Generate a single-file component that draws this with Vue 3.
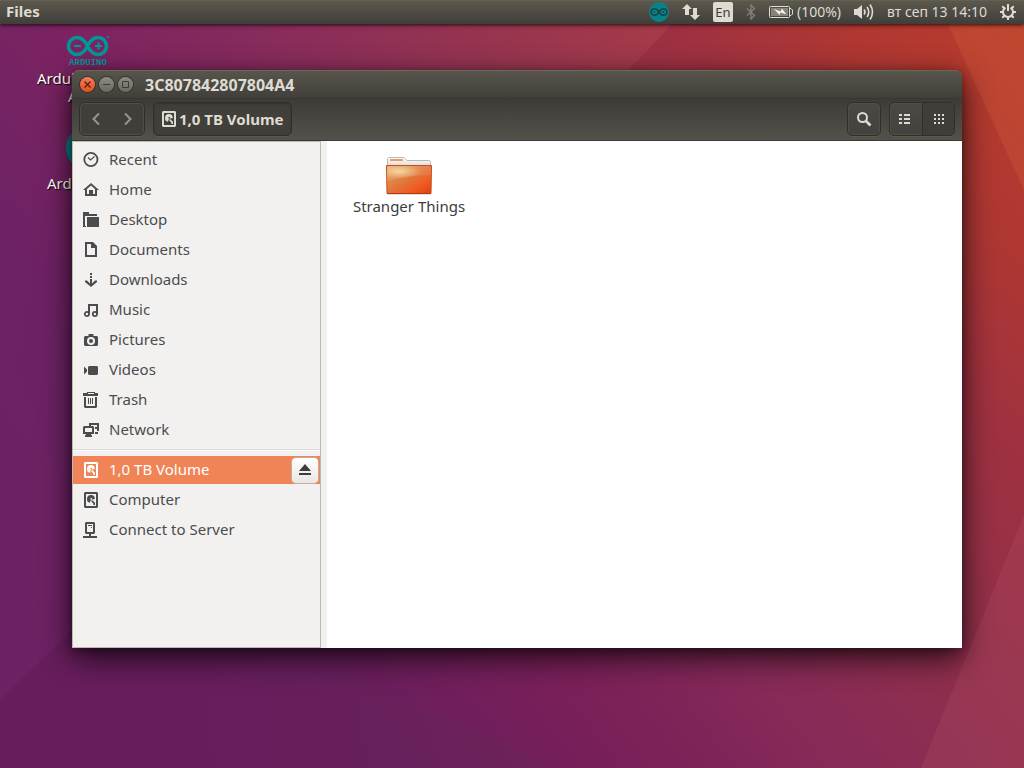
<script setup>
import { ref } from 'vue'

const drive = {
  fill: 'M2 0h12l1 1v14l-1 1H2l-1-1V1zM3 2v12h10V2zM11.800 7a3.900 3.900 0 1 0-4.800 3.800l.500-2 1-1zM7.500 6h1.500v1.500H7.500zM8.500 8.500h1.500l1 1.500 1 .500V13h-1.500l-.500-2-1.500-1z'
}

const places = [
  { name: 'Recent', stroke: 'M14.500 7.500a6.600 6.600 0 1 1-13.200 0a6.600 6.600 0 0 1 13.200 0z', thin: 'M5 5.500L7.500 8l4-3.500' },
  { name: 'Home', fill: 'M8 1L0 8h2v6h12V8h2zM8 3.600L12 7v5h-2V8H6v4H4V7z' },
  { name: 'Desktop', fill: 'M0 0h6v2h8v2H3v11H0zM4 5h12v10H4zM2 4v10h1V4z' },
  { name: 'Documents', fill: 'M2 0h8l4 4v11H2zM4 2v11h8V6H8V2z' },
  { name: 'Downloads', fill: 'M7 1h2v2H7zM7 4h2v2H7zM7 7h2v4.500l3-3h2V10l-6 5L2 10V8.500h2l3 3z' },
  { name: 'Music', fill: 'M5 2h10v10h-2V4H7v8H5z', stroke: 'M6 12a2.100 2.100 0 1 1-4.200 0a2.100 2.100 0 0 1 4.200 0zM14 12a2.100 2.100 0 1 1-4.200 0a2.100 2.100 0 0 1 4.200 0z' },
  { name: 'Pictures', fill: 'M5.500 2h5v2H14l1 1v8l-1 1H2l-1-1V5l1-1h3.500zM8 5a4 4 0 1 0 0 8a4 4 0 0 0 0-8zM8 7a2 2 0 1 1 0 4a2 2 0 0 1 0-4z' },
  { name: 'Videos', fill: 'M1 4.500l3 3v2l-3 3zM6 4h8l1 1v7l-1 1H6L5 12V5z' },
  { name: 'Trash', fill: 'M4 0h8v1h3v3H0V1h4zM5 1v1h6V1zM1 5h2v9h9V5h2v10l-1 1H2l-1-1zM5 6h1v6H5zM7 6h1v6H7zM9 6h1v6H9z' },
  { name: 'Network', fill: 'M6 1h10v8h-2v1h1v2h-3v-2h2V7H12V5h2V3H8v1H6zM1 4h9l1 1v7H8l1 2v1H2v-1l1-2H0V5zM2 6v4h7V6z' }
]

const devices = [
  { name: '1,0 TB Volume', ...drive, mounted: true },
  { name: 'Computer', ...drive },
  { name: 'Connect to Server', fill: 'M3 0h8l1 1v10l-1 1H8v2h6v2H0v-2h6v-2H3l-1-1V1zM4 2v8h6V2zM5 3h4v1H5zM8 5h1v1H8z' }
]

const current = ref('1,0 TB Volume')
</script>

<template>
  <div class="desktop">
    <svg class="wallpaper" viewBox="0 0 1024 768" preserveAspectRatio="none" aria-hidden="true">
      <defs>
        <linearGradient id="facet" x1="0" y1="0" x2="1" y2="0">
          <stop offset="0" stop-color="#8a3fa0" stop-opacity=".12" />
          <stop offset="1" stop-color="#8a3fa0" stop-opacity="0" />
        </linearGradient>
        <linearGradient id="ridge" x1="0" y1="0" x2="1" y2="0">
          <stop offset="0" stop-color="#d06a70" stop-opacity="0" />
          <stop offset="1" stop-color="#d06a70" stop-opacity=".16" />
        </linearGradient>
        <linearGradient id="valley" x1="0" y1="0" x2="1" y2="0">
          <stop offset="0" stop-color="#5c2f50" stop-opacity="0" />
          <stop offset="1" stop-color="#5c2f50" stop-opacity=".25" />
        </linearGradient>
      </defs>
      <polygon points="0,24 0,305 72,520 500,24" fill="url(#facet)" />
      <polygon points="0,305 72,520 72,630 0,700" fill="#8a3a80" opacity=".16" />
      <polygon points="250,24 672,24 300,420" fill="url(#ridge)" />
      <polygon points="948,24 1024,190 1024,24" fill="#d0603a" opacity=".3" />
      <polygon points="1024,515 921,768 1024,768" fill="#c05a70" opacity=".2" />
      <polygon points="200,648 300,648 552,768 200,768" fill="url(#valley)" />
    </svg>

    <header class="panel">
      <span class="app-name">Files</span>
      <div class="tray">
        <button aria-label="Arduino">
          <svg width="20" height="20" viewBox="0 0 20 20">
            <circle cx="10" cy="10" r="10" fill="#0a8287" />
            <path d="M10 10C8.500 7.500 7.500 6.700 5.500 6.700a3.300 3.300 0 0 0 0 6.600C7.500 13.300 8.500 12.500 10 10s2.500-3.300 4.500-3.300a3.300 3.300 0 0 1 0 6.600c-2 0-3-.8-4.500-3.300z" fill="none" stroke="#12454a" stroke-width="1.500" />
            <path d="M4.500 10h2M13.500 10h2M14.500 9v2" stroke="#12454a" />
          </svg>
        </button>
        <button aria-label="Network connections">
          <svg width="18" height="18" viewBox="0 0 18 18" fill="#dfdbd2">
            <path d="M5 1l5 5H7v6H3V6H0z" /><path d="M11 5h4v7h3l-5 5-5-5h3z" />
          </svg>
        </button>
        <button class="layout"><span>En</span></button>
        <button aria-label="Bluetooth">
          <svg width="10" height="16" viewBox="0 0 10 16" fill="none" stroke="#85837b" stroke-width="1.300">
            <path d="M1 4.500l7.500 7L5 15V1l3.500 3.500L1 11.500" />
          </svg>
        </button>
        <button class="battery">
          <svg width="24" height="14" viewBox="0 0 24 14">
            <rect x=".5" y="1.500" width="20" height="11" rx="1" fill="none" stroke="#dfdbd2" />
            <rect x="2" y="3" width="17" height="8" fill="#85837b" />
            <path d="M21 3.500h1l1.500 1.500v4l-1.500 1.500h-1" fill="none" stroke="#dfdbd2" />
            <path d="M5 4l6.500 2.500L13 3.500l4.500 6L11.500 7.500 10.500 10z" fill="#f4f0e6" />
          </svg>
          <span>(100%)</span>
        </button>
        <button aria-label="Volume">
          <svg width="20" height="18" viewBox="0 0 20 18">
            <path d="M0 6h3l5-4v14l-5-4H0z" fill="#dfdbd2" />
            <g fill="none" stroke="#dfdbd2" stroke-width="1.600">
              <path d="M10 6.500q2 2.500 0 5" /><path d="M13 4q3.500 5 0 10" /><path d="M16 1.500q5 7.500 0 15" />
            </g>
          </svg>
        </button>
        <button class="clock"><span>вт сеп 13 14:10</span></button>
        <button aria-label="System">
          <svg width="16" height="16" viewBox="0 0 16 16" fill="none" stroke="#dfdbd2">
            <path d="M5.500 3.700a5 5 0 1 0 5 0" stroke-width="2" />
            <path d="M8 0v7" stroke-width="2" />
            <path d="M2.300 2.300l2 2M13.700 2.300l-2 2M0 8h3M13 8h3M2.300 13.700l2-2M13.700 13.700l-2-2M8 13v3" stroke-width="2" />
          </svg>
        </button>
      </div>
    </header>

    <div class="shortcut first">
      <svg width="44" height="32" viewBox="0 0 44 32">
        <path d="M21.500 11C18.500 5 15.500 2.500 11 2.500a8.500 8.500 0 0 0 0 17c4.500 0 7.500-2.500 10.500-8.500S27.500 2.500 32 2.500a8.500 8.500 0 0 1 0 17c-4.500 0-7.500-2.500-10.500-8.500z" fill="none" stroke="#00979c" stroke-width="3.600" />
        <path d="M8 11h7M29 11h7M32.500 7.500v7" stroke="#00979c" stroke-width="2" />
        <circle cx="42" cy="2" r="1" fill="#00979c" />
        <text x="22" y="30" text-anchor="middle" class="brand">ARDUINO</text>
      </svg>
      <span class="caption">Arduino<br><span class="indent">A</span></span>
    </div>
    <div class="shortcut second">
      <svg width="44" height="44" viewBox="0 0 44 44"><circle cx="22" cy="22" r="22" fill="#0a8287" /></svg>
      <span class="caption">Arduino</span>
    </div>

    <main class="window">
      <div class="titlebar">
        <button class="dot close" aria-label="Close">
          <svg width="7" height="7" viewBox="0 0 7 7"><path d="M.5.500l6 6M6.500.500l-6 6" stroke="#522013" stroke-width="1.300" /></svg>
        </button>
        <button class="dot" aria-label="Minimize">
          <svg width="7" height="7" viewBox="0 0 7 7"><path d="M0 3.500h7" stroke="#3c3b37" /></svg>
        </button>
        <button class="dot" aria-label="Maximize">
          <svg width="7" height="7" viewBox="0 0 7 7"><path d="M.5.500h6v6h-6z" fill="none" stroke="#3c3b37" /></svg>
        </button>
        <h1>3C807842807804A4</h1>
      </div>
      <div class="toolbar">
        <div class="group history">
          <button aria-label="Back"><svg width="16" height="16" viewBox="0 0 16 16"><path d="M11 2.500L5.500 8l5.500 5.500" /></svg></button>
          <button aria-label="Forward"><svg width="16" height="16" viewBox="0 0 16 16"><path d="M5 2.500L10.500 8 5 13.500" /></svg></button>
        </div>
        <button class="group location">
          <svg width="16" height="16" viewBox="0 0 16 16"><path :d="drive.fill" fill="#dfdbd2" fill-rule="evenodd" /></svg>
          <span>1,0 TB Volume</span>
        </button>
        <div class="spacer"></div>
        <div class="group search">
          <button aria-label="Search">
            <svg width="16" height="16" viewBox="0 0 16 16" fill="none" stroke="#dfdbd2"><circle cx="6.500" cy="6.500" r="4.500" stroke-width="2" /><path d="M10 10l4.500 4.500" stroke-width="2.600" /></svg>
          </button>
        </div>
        <div class="group views">
          <button aria-label="List view">
            <svg width="16" height="16" viewBox="0 0 16 16" fill="#dfdbd2"><path d="M1 3h3v2H1zM6 3h6v2H6zM1 7h3v2H1zM6 7h6v2H6zM1 11h3v2H1zM6 11h6v2H6z" /></svg>
          </button>
          <button class="pressed" aria-label="Icon view">
            <svg width="16" height="16" viewBox="0 0 16 16" fill="#dfdbd2"><path d="M3 3h2v2H3zM7 3h2v2H7zM11 3h2v2h-2zM3 7h2v2H3zM7 7h2v2H7zM11 7h2v2h-2zM3 11h2v2H3zM7 11h2v2H7zM11 11h2v2h-2z" /></svg>
          </button>
        </div>
      </div>
      <div class="body">
        <nav class="sidebar">
          <ul v-for="(list, n) in [places, devices]" :key="n">
            <li v-for="item in list" :key="item.name" :class="{ selected: item.name === current }">
              <button class="place" @click="current = item.name">
                <svg width="16" height="16" viewBox="0 0 16 16">
                  <path v-if="item.fill" :d="item.fill" fill="currentColor" fill-rule="evenodd" />
                  <path v-if="item.stroke" :d="item.stroke" fill="none" stroke="currentColor" stroke-width="1.800" />
                  <path v-if="item.thin" :d="item.thin" fill="none" stroke="currentColor" stroke-width="1.200" />
                </svg>
                <span>{{ item.name }}</span>
              </button>
              <button v-if="item.mounted" class="eject" aria-label="Eject">
                <svg width="12" height="12" viewBox="0 0 12 12" fill="#3c3c3c"><path d="M6 0l6 7H0zM0 9h12v2H0z" /></svg>
              </button>
            </li>
          </ul>
        </nav>
        <section class="files">
          <button class="folder">
            <svg width="48" height="40" viewBox="0 0 48 40">
              <defs>
                <linearGradient id="front" x1="0" y1="0" x2="1" y2="1">
                  <stop offset="0" stop-color="#e8a060" /><stop offset=".45" stop-color="#e07a3c" /><stop offset=".75" stop-color="#f05a22" /><stop offset="1" stop-color="#d8400f" />
                </linearGradient>
                <radialGradient id="shine" cx=".28" cy=".35" r=".5">
                  <stop offset="0" stop-color="#f7d9a0" stop-opacity=".9" /><stop offset="1" stop-color="#f7d9a0" stop-opacity="0" />
                </radialGradient>
                <linearGradient id="paper" x1="0" y1="0" x2="0" y2="1">
                  <stop offset="0" stop-color="#fff" /><stop offset="1" stop-color="#d4d4d2" />
                </linearGradient>
              </defs>
              <rect x="2" y="36" width="44" height="3" rx="1" fill="#000" opacity=".12" />
              <path d="M2.500 12V2.500l1-1h15.500l3 3h22.500l1 1V12z" fill="url(#paper)" stroke="#b9b9b6" />
              <rect x="5" y="3" width="13" height="2" fill="#f09a62" />
              <path d="M1.500 9.500h45l-.500 28h-44z" fill="url(#front)" stroke="#c4501c" />
              <path d="M2 10h44v8C30 19 16 22 2 25z" fill="url(#shine)" />
              <path d="M2 10h44v9C30 19 16 22 2 25z" fill="#fff" opacity=".1" />
              <path d="M2 37.500h44" stroke="#b8380c" />
            </svg>
            <span>Stranger Things</span>
          </button>
        </section>
      </div>
    </main>
  </div>
</template>

<style>
html, body, #app { height: 100%; }
body { margin: 0; }
</style>

<style scoped>
.desktop {
  position: relative;
  display: flex;
  flex-direction: column;
  height: 100%;
  overflow: hidden;
  font: 15px/20px "Noto Sans", "Open Sans", sans-serif;
  background: linear-gradient(52deg, #671d5c 0%, #681e5d 25%, #7b2059 40%, #862a58 51%, #933049 68%, #9f3140 78%, #ae3732 87%, #bb3d2c 100%);
}
button {
  margin: 0;
  padding: 0;
  border: 0;
  background: none;
  font: inherit;
  color: inherit;
}
svg { display: block; flex: none; }
ul { list-style: none; margin: 0; padding: 0; }
.wallpaper { position: absolute; inset: 0; width: 100%; height: 100%; }

.panel {
  position: relative;
  display: flex;
  align-items: center;
  justify-content: space-between;
  height: 24px;
  padding: 0 8px 0 6px;
  box-sizing: border-box;
  color: #dfdbd2;
  background: linear-gradient(#5c594f, #3f3e39);
  box-shadow: inset 0 1px 0 #66614f, 0 1px 4px rgba(0, 0, 0, .8);
}
.app-name, .place span { padding-bottom: 2px; }
.app-name { font-weight: 700; }
.tray { display: flex; align-items: center; gap: 13px; font-size: 14px; }
.tray button { display: flex; align-items: center; }
.tray .layout {
  justify-content: center;
  width: 20px;
  height: 20px;
  border-radius: 2px;
  background: #dfdbd2;
  color: #3c3b37;
  font-size: 13px;
}
.tray .battery { gap: 4px; }

.shortcut { position: absolute; color: #fff; text-shadow: 1px 1px 1px #000; }
.shortcut .caption { display: block; line-height: 18px; }
.first { left: 37px; top: 35px; }
.first svg { margin-left: 29px; }
.first .caption { margin-top: 2px; }
.indent { margin-left: 31px; }
.second { left: 47px; top: 126px; }
.second svg { margin-left: 19px; }
.second .caption { margin-top: 4px; }
.brand { font: bold 9px "Liberation Mono", monospace; fill: #00979c; text-shadow: none; }

.window {
  position: absolute;
  inset: 70px 62px 120px 72px;
  display: flex;
  flex-direction: column;
  border-radius: 7px 7px 0 0;
  box-shadow: 0 10px 30px rgba(0, 0, 0, .75), 0 2px 8px rgba(0, 0, 0, .3);
}
.titlebar {
  display: flex;
  align-items: center;
  gap: 4px;
  height: 29px;
  padding: 0 8px;
  box-sizing: border-box;
  border-top: 1px solid #6b675a;
  border-bottom: 1px solid #383733;
  border-radius: 7px 7px 0 0;
  background: linear-gradient(#57554c, #403f3a);
}
.titlebar h1 {
  margin: 0 0 0 8px;
  font-size: 16px;
  line-height: 20px;
  color: #dfdbd2;
}
.dot {
  display: grid;
  place-items: center;
  width: 15px;
  height: 15px;
  box-sizing: border-box;
  border-radius: 50%;
  background: linear-gradient(#8d8b84, #6a6860);
  box-shadow: 0 0 0 1px #35342f;
}
.titlebar .close { background: linear-gradient(#f47c56, #e4501f); }
.toolbar {
  display: flex;
  align-items: flex-start;
  gap: 8px;
  height: 42px;
  padding: 3px 7px 0;
  box-sizing: border-box;
  border-bottom: 1px solid #3a3935;
  background: linear-gradient(#3d3c38, #53514a);
}
.group {
  display: flex;
  height: 34px;
  box-sizing: border-box;
  border: 1px solid #302f2b;
  border-radius: 5px;
  box-shadow: inset 0 0 0 1px #504e47, 0 1px 0 #5b5950;
  overflow: hidden;
}
.group button { display: grid; place-items: center; width: 32px; }
.history { background: #403f3a; }
.history path { fill: none; stroke: #98958c; stroke-width: 2; }
.toolbar .location {
  align-items: center;
  gap: 2px;
  padding: 0 7px;
  color: #dfdbd2;
  font-weight: 700;
  background: #403f3a;
  box-shadow: inset 0 1px 2px #35342f, 0 1px 0 #5b5950;
}
.search, .views { background: linear-gradient(#4a4943, #43423c); }
.views .pressed { background: #3f3e39; border-left: 1px solid #302f2b; }
.spacer { flex: 1; }

.body { display: flex; flex: 1; min-height: 0; background: #f2f1f0; }
.sidebar {
  width: 249px;
  box-sizing: border-box;
  padding-top: 4px;
  border: 1px solid #bdbab4;
  background: #f2f1f0;
  color: #4c4c4c;
}
.sidebar ul + ul {
  margin-top: 3px;
  padding-top: 6px;
  border-top: 1px solid #dcdbd9;
  box-shadow: inset 0 1px 0 #fff;
}
.sidebar li {
  display: flex;
  align-items: center;
  height: 28px;
  padding-bottom: 2px;
  background-clip: content-box;
}
.place {
  display: flex;
  flex: 1;
  align-items: center;
  gap: 10px;
  height: 28px;
  padding-left: 10px;
  text-align: left;
}
.sidebar .selected { background-color: #f08457; color: #fff; }
.eject {
  display: grid;
  place-items: center;
  width: 26px;
  height: 25px;
  margin-right: 2px;
  border-radius: 4px;
  background: linear-gradient(#fff, #e8e7e5);
  box-shadow: 0 0 0 1px #c9ab9c;
}
.files { flex: 1; margin-left: 6px; padding: 15px 20px; background: #fff; }
.folder {
  display: flex;
  flex-direction: column;
  align-items: center;
  width: 124px;
  color: #3c3c3c;
}
</style>
